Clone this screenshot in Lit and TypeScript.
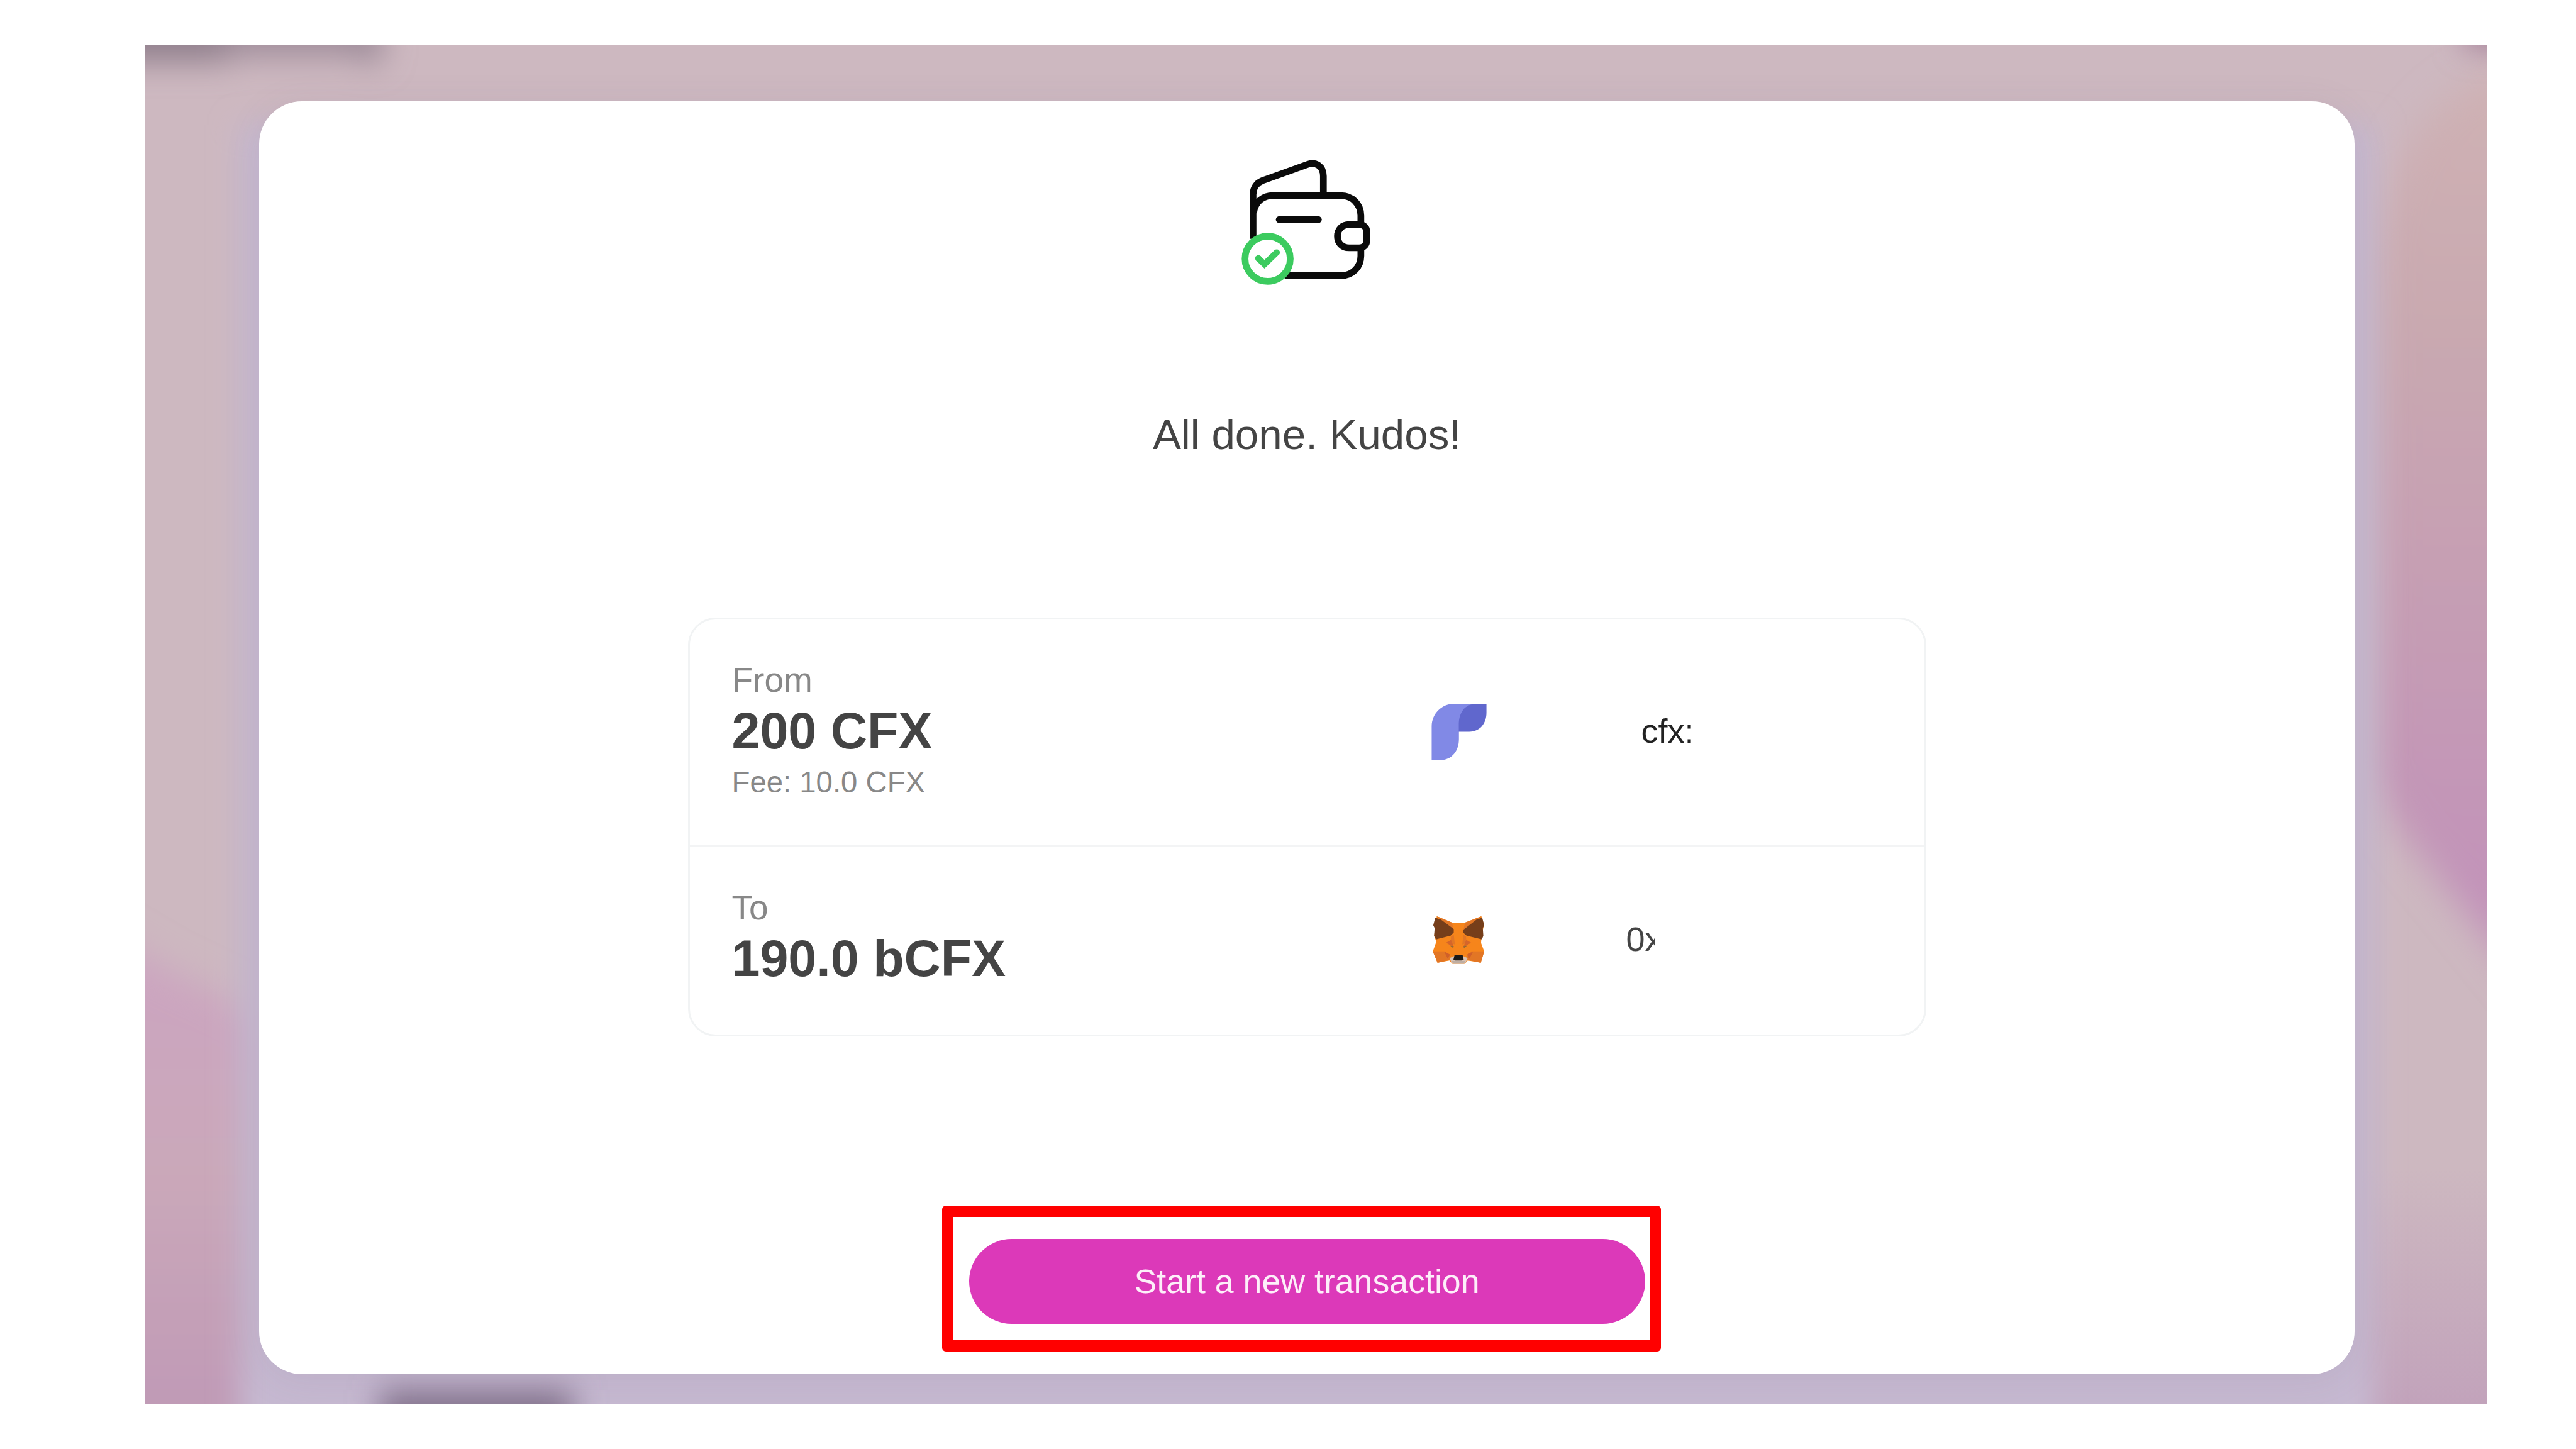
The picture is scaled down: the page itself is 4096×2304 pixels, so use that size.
import { LitElement, html, css, svg } from "lit";
import { customElement } from "lit/decorators.js";

const walletIcon = svg`
  <svg class="wallet" viewBox="250 140 950 910" fill="none" stroke="#0a0a0a" stroke-width="47" stroke-linecap="round">
    <path stroke-linecap="butt" d="M353 710V400C353 355 378 320 418 304L733 190C790 168 845 203 845 272V400"/>
    <path stroke-linecap="butt" d="M357 530C365 450 425 408 492 408H968C1048 408 1107 470 1107 548V600M1107 780V830C1107 908 1048 968 968 968H575"/>
    <path d="M536 576H810"/>
    <path d="M1025 611H1095C1128 611 1148 630 1148 660V724C1148 754 1128 773 1095 773H1025C975 773 943 738 943 692S975 611 1025 611Z"/>
    <circle cx="455" cy="850" r="158" fill="#fff" stroke="#3ccb5f"/>
    <path d="M389 846L433 888L519 805" stroke="#3ccb5f" stroke-width="44" stroke-linecap="butt"/>
    <circle cx="390" cy="847" r="22" fill="#3ccb5f" stroke="none"/>
    <circle cx="519" cy="806" r="22" fill="#3ccb5f" stroke="none"/>
  </svg>`;

const fluentIcon = svg`
  <svg class="fluent" viewBox="166 114 386 397">
    <path fill="#8189e6" d="M168 509V275C168 190 235 117 325 117H480L358 312V365C358 445 308 509 235 509Z"/>
    <path fill="#6067cd" d="M357 312V260C357 180 400 117 480 117H550V180C550 255 505 312 430 312Z"/>
  </svg>`;

const foxIcon = svg`
  <svg class="fox" viewBox="165 125 380 350">
    <path fill="#f6851b" d="M203 132L310 176H402L516 132L534 190L516 285L514 320L536 378L512 458L420 442L400 466H312L292 442L208 458L175 378L200 310L184 270Z"/>
    <path fill="#e27625" d="M200 131L310 176L322 235ZM518 131L402 176L388 235Z"/>
    <path fill="#e27625" d="M175 378H262L300 412L290 438L208 459ZM536 378H446L410 412L420 438L512 459Z"/>
    <path fill="#763e1a" d="M192 142L232 155L322 222V246L300 268L198 294L184 268L188 215L178 195ZM522 142L482 155L388 228V246L412 268L520 294L530 268L526 215L536 195Z"/>
    <path fill="#e27625" d="M303 272L322 262L330 330L300 320ZM408 272L390 262L382 330L412 320Z"/>
    <path fill="#d5652a" d="M268 318L303 298L324 350ZM444 318L410 298L388 350Z"/>
    <path fill="#8f6a34" d="M296 338L322 342L318 355ZM416 338L390 342L394 355Z"/>
    <path fill="#d0602a" d="M255 380L296 400L280 430ZM458 380L416 400L432 430Z"/>
    <path fill="#d9c3b5" d="M292 426L325 412H388L420 426L402 464H310Z"/>
    <path fill="#bfaea2" d="M306 446H404L394 466H318Z"/>
    <path fill="#1d1a17" d="M328 404H384L392 436L380 442H332L320 436Z"/>
  </svg>`;

const backdrop = svg`
  <svg class="backdrop" viewBox="338 104 5456 3168" preserveAspectRatio="none">
    <defs>
      <linearGradient id="rightBlob" gradientUnits="userSpaceOnUse" x1="0" y1="150" x2="0" y2="2150">
        <stop offset="0" stop-color="#cfb2b4"/>
        <stop offset=".3" stop-color="#c9a9b0"/>
        <stop offset=".58" stop-color="#c69fb3"/>
        <stop offset=".85" stop-color="#c396b7"/>
        <stop offset="1" stop-color="#c292ba"/>
      </linearGradient>
      <linearGradient id="leftBlob" gradientUnits="userSpaceOnUse" x1="0" y1="2200" x2="0" y2="3272">
        <stop offset="0" stop-color="#cca4c1"/>
        <stop offset=".5" stop-color="#caa8b9"/>
        <stop offset="1" stop-color="#c09ab6"/>
      </linearGradient>
      <linearGradient id="footFade" x1="0" y1="0" x2="0" y2="1">
        <stop offset="0" stop-color="#c2a3bb" stop-opacity="0"/>
        <stop offset="1" stop-color="#c2a3bb"/>
      </linearGradient>
      <filter id="soft" x="-40%" y="-30%" width="180%" height="160%"><feGaussianBlur stdDeviation="42"/></filter>
      <filter id="panelSoft" filterUnits="userSpaceOnUse" x="300" y="60" width="5600" height="3700"><feGaussianBlur stdDeviation="34"/></filter>
      <filter id="text" x="-60%" y="-150%" width="220%" height="400%"><feGaussianBlur stdDeviation="36"/></filter>
    </defs>
    <rect x="338" y="104" width="5456" height="3168" fill="#cdb8c0"/>
    <path filter="url(#soft)" fill="url(#rightBlob)" d="M6000 70L5780 180C5640 250 5525 400 5525 700V1800C5550 1880 5600 1950 5650 2010L6000 2440Z"/>
    <rect x="5300" y="2720" width="500" height="552" fill="url(#footFade)"/>
    <path filter="url(#soft)" fill="url(#leftBlob)" d="M50 2060L340 2230C430 2290 600 2330 700 2460V3500H50Z"/>
    <rect filter="url(#panelSoft)" x="558" y="290" width="4972" height="3300" fill="#c6b9d1"/>
    <g filter="url(#text)">
      <rect x="200" y="20" width="340" height="125" fill="#91808d"/>
      <rect x="520" y="20" width="370" height="112" fill="#a08e9b"/>
      <circle cx="862" cy="118" r="32" fill="#9a8896"/>
    </g>
    <rect filter="url(#text)" x="5740" y="20" width="160" height="90" fill="#a27c96"/>
    <rect filter="url(#text)" x="885" y="3238" width="450" height="110" fill="#83728c"/>
  </svg>`;

@customElement("app-root")
export class AppRoot extends LitElement {
  static styles = css`
    :host {
      display: block;
      width: 4096px;
      height: 2304px;
      overflow: hidden;
      background: #fff;
      font-family: "Liberation Sans", Arial, sans-serif;
    }
    .page {
      box-sizing: border-box;
      width: 4096px;
      height: 2304px;
      padding: 71px 141px 71px 231px;
    }
    .frame {
      position: relative;
      box-sizing: border-box;
      width: 3724px;
      height: 2162px;
      padding: 90px 0 0 181px;
      overflow: hidden;
    }
    .backdrop {
      position: absolute;
      inset: 0;
      width: 100%;
      height: 100%;
    }
    .modal {
      position: relative;
      box-sizing: border-box;
      width: 3332px;
      height: 2024px;
      padding-top: 89px;
      border-radius: 68px;
      background: #fff;
      box-shadow: 0 10px 60px rgba(110, 90, 120, 0.1);
      display: flex;
      flex-direction: column;
      align-items: center;
    }
    .wallet {
      display: block;
      width: 216px;
      height: 207px;
      margin-right: 3px;
    }
    .title {
      margin: 182px 0 0;
      font-size: 67.3px;
      line-height: 104px;
      font-weight: 400;
      color: #444;
    }
    .card {
      box-sizing: border-box;
      width: 1969px;
      margin-top: 239px;
      border: 3px solid #f1f3f4;
      border-radius: 44px;
    }
    .row {
      box-sizing: border-box;
      display: grid;
      grid-template-columns: 1112px 309px 1fr;
      height: 298px;
      padding: 0 0 3px 67px;
      align-items: center;
    }
    .row.from {
      height: 362px;
      padding-bottom: 0;
      border-bottom: 3px solid #f3f4f5;
    }
    .amounts {
      align-self: start;
      padding-top: 60px;
    }
    .label {
      font-size: 55px;
      line-height: 72px;
      color: #888;
    }
    .amount {
      font-size: 80.8px;
      line-height: 91px;
      font-weight: 700;
      color: #444;
    }
    .fee {
      font-size: 47.3px;
      line-height: 71px;
      color: #888;
    }
    .fluent {
      display: block;
      width: 88px;
      height: 91px;
      margin-top: -2px;
    }
    .fox {
      display: block;
      width: 86px;
      height: 80px;
    }
    .address {
      font-size: 54px;
      line-height: 72px;
      color: #222;
      padding: 0 0 5px 25px;
    }
    .address.masked {
      position: relative;
      padding: 0 0 3px 1px;
      color: #444;
    }
    .address.masked::after {
      content: "";
      position: absolute;
      top: 0;
      bottom: 0;
      left: 46px;
      width: 400px;
      background: #fff;
    }
    .highlight {
      box-sizing: border-box;
      width: 1143px;
      height: 232px;
      margin: 269px 18px 0 0;
      border: 18px solid #f00;
      border-radius: 6px;
      padding: 35px 0 0 25px;
    }
    .action {
      display: block;
      width: 1075px;
      height: 135px;
      padding: 0;
      border: 0;
      border-radius: 68px;
      background: #dc39b9;
      color: #fdeff9;
      font-family: inherit;
      font-size: 53.7px;
      line-height: 133px;
      text-align: center;
    }
  `;

  render() {
    return html`
      <div class="page">
        <div class="frame">
          ${backdrop}
          <main class="modal">
            ${walletIcon}
            <h1 class="title">All done. Kudos!</h1>
            <section class="card">
              <div class="row from">
                <div class="amounts">
                  <div class="label">From</div>
                  <div class="amount">200 CFX</div>
                  <div class="fee">Fee: 10.0 CFX</div>
                </div>
                ${fluentIcon}
                <div class="address">cfx:</div>
              </div>
              <div class="row">
                <div class="amounts">
                  <div class="label">To</div>
                  <div class="amount">190.0 bCFX</div>
                </div>
                ${foxIcon}
                <div class="address masked">0x</div>
              </div>
            </section>
            <div class="highlight">
              <button class="action">Start a new transaction</button>
            </div>
          </main>
        </div>
      </div>
    `;
  }
}
